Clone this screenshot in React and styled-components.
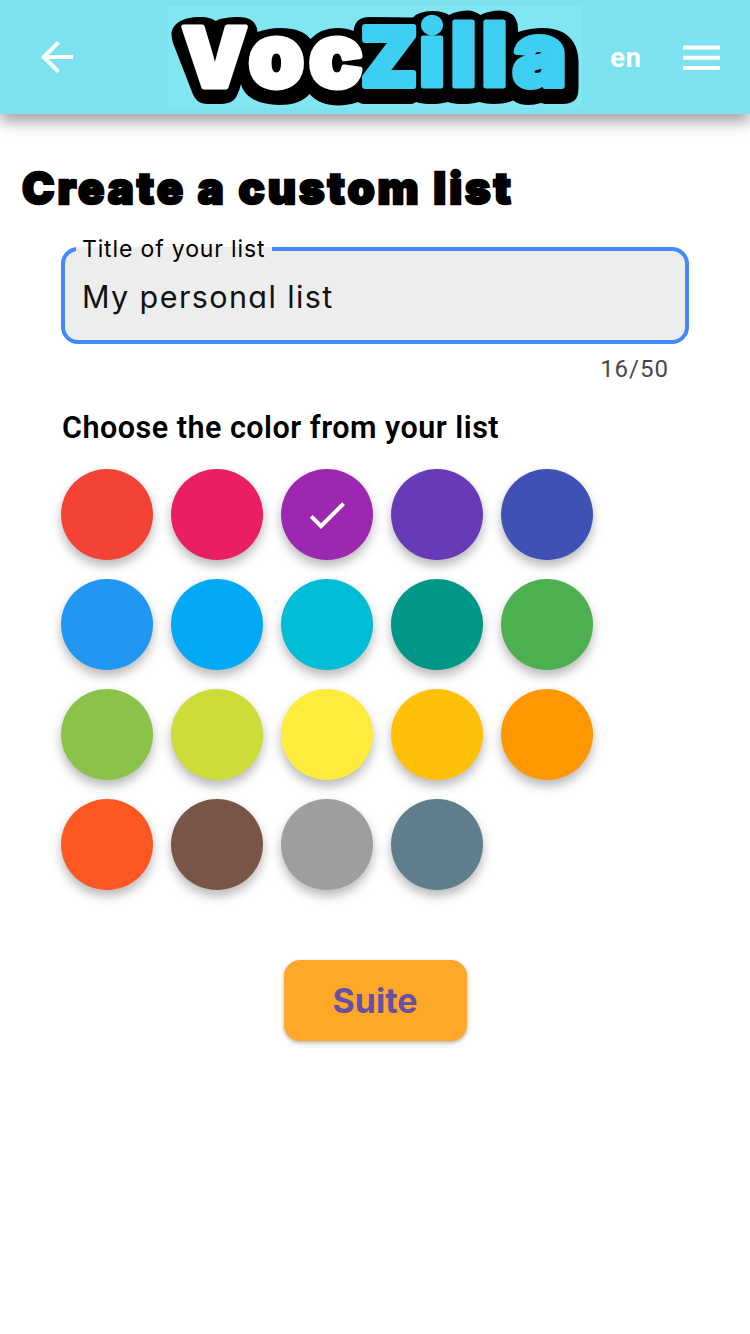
import React, { useState } from "react";
import styled, { createGlobalStyle } from "styled-components";

const GlobalStyle = createGlobalStyle`
  * { box-sizing: border-box; }
  body { margin: 0; background: #fff; font-family: Roboto, sans-serif; }
  button { border: 0; background: none; padding: 0; font: inherit; cursor: pointer; }
`;

const Page = styled.div`
  min-height: 1334px;
  background: #fff;
  overflow: hidden;
`;

const Header = styled.header`
  display: flex;
  align-items: center;
  height: 114px;
  background: #7de2f0;
  box-shadow: 0 8px 14px rgba(0, 0, 0, 0.36);
`;

const BackButton = styled.button`
  display: flex;
  justify-content: center;
  width: 114px;
`;

const Brand = styled.div`
  width: 414px;
  height: 102px;
  margin-left: 54px;
  background: #80e7f2;
`;

const Language = styled.button`
  margin-left: 27px;
  padding-top: 2px;
  width: 34px;
  color: #fff;
  font-size: 27px;
  font-weight: 700;
  line-height: 32px;
  letter-spacing: 1px;
`;

const MenuButton = styled.button`
  display: flex;
  margin-left: 40px;
  padding-top: 1px;
`;

const Title = styled.h1`
  margin: 47px 0 0 22px;
  height: 58px;
  font-family: Inter, sans-serif;
  font-size: 43.5px;
  font-weight: 900;
  line-height: 55px;
  letter-spacing: 3px;
  color: #000;
  -webkit-text-stroke: 2.4px #000;
  white-space: nowrap;
`;

const Form = styled.form`
  padding: 0 61px;
`;

const Field = styled.fieldset`
  margin: 15px 0 0;
  padding: 0 17px;
  height: 110px;
  min-width: 0;
  border: 4px solid #448aff;
  border-radius: 17px;
  background: #ededed;
`;

const FieldLabel = styled.legend`
  margin-left: -6px;
  padding: 0 7px 0 6px;
  height: 30px;
  font-family: Inter, sans-serif;
  font-feature-settings: "cv11";
  font-size: 23px;
  font-weight: 400;
  line-height: 30px;
  letter-spacing: 0.85px;
  color: #000;
  white-space: nowrap;
`;

const TextInput = styled.input`
  display: block;
  width: 100%;
  height: 48px;
  margin-top: 8px;
  padding: 0;
  border: 0;
  outline: 0;
  background: transparent;
  font-family: Inter, sans-serif;
  font-feature-settings: "cv11";
  font-size: 30.5px;
  font-weight: 400;
  letter-spacing: 1.4px;
  color: #111;
`;

const Counter = styled.div`
  margin: 10px 20px 0 0;
  text-align: right;
  font-size: 24px;
  line-height: 30px;
  letter-spacing: 1px;
  color: #49454f;
`;

const Subtitle = styled.h2`
  margin: 26px 0 0 1px;
  font-size: 30.5px;
  font-weight: 650;
  line-height: 36px;
  letter-spacing: 0.5px;
  color: #000;
  white-space: nowrap;
`;

const Palette = styled.div`
  display: grid;
  grid-template-columns: repeat(5, 92px);
  gap: 19px 18px;
  margin-top: 23px;
`;

const Swatch = styled.button`
  display: flex;
  align-items: center;
  justify-content: center;
  width: 92px;
  height: 91px;
  border-radius: 50%;
  background: ${(p) => p.$color};
  box-shadow: 0 6px 11px rgba(0, 0, 0, 0.28);
`;

const Submit = styled.button`
  display: block;
  width: 183px;
  height: 81px;
  margin: 70px auto 0;
  border-radius: 16px;
  background: #ffa726;
  box-shadow: 0 2px 4px rgba(0, 0, 0, 0.3);
  color: #6750a4;
  font-family: Inter, sans-serif;
  font-size: 34px;
  font-weight: 700;
  line-height: 82px;
`;

const COLORS = [
  "#f44336", "#e91e63", "#9c27b0", "#673ab7", "#3f51b5",
  "#2196f3", "#03a9f4", "#00bcd4", "#009688", "#4caf50",
  "#8bc34a", "#cddc39", "#ffeb3b", "#ffc107", "#ff9800",
  "#ff5722", "#795548", "#9e9e9e", "#607d8b",
];

const LogoSvg = styled.svg`
  display: block;
  overflow: visible;
  font-family: Inter, sans-serif;
  font-weight: 900;
  stroke-linejoin: round;
`;

function Logo() {
  return (
    <LogoSvg width="414" height="102" viewBox="168 6 414 102">
      <path d="M171.500 34C172 24 182 17 200 17C208 17 213 19 215.500 21C221 18 230 17 238 17C251 17 257 23 257.500 32Q269 28 280 28Q302 28 310.500 39Q321 28 337 28Q347 28 353.500 31Q355 17 369 17L413 17.500Q419 11 432 11Q443 11 449 15Q457 10.500 469 10.500Q475 11 480.500 15Q489 10.500 500 10.500Q519 11 518 32Q530 28 543 28C568 28 578.500 43 578.500 62V88C578.500 99 574 104 562 104L545 104L541 103Q524 108 513 100.500C505 104.500 488 105 479.500 102C471 104.500 455 105 448 102C440 104.500 424 105 416.500 102L412 104H366Q360 104 358.500 102C341 108 321 107 309.500 94C303 102 292 105 279 105C261 105 244 98 241 84C237 98 235 104 219 104H208C199 104 195 100 192 92L173 43Q171.500 38 171.500 34Z" />
      <text fill="#fff" stroke="#fff" strokeWidth="5">
        <tspan x="182" y="86.500" fontSize="82">V</tspan>
        <tspan x="248.500 309" fontSize="89">oc</tspan>
      </text>
      <text fill="#3dcff2" stroke="#3dcff2" strokeWidth="6">
        <tspan x="361" y="86" fontSize="81">Z</tspan>
        <tspan x="419 450.500 481.500" fontSize="88" strokeWidth="5">ill</tspan>
        <tspan x="513" fontSize="89">a</tspan>
      </text>
    </LogoSvg>
  );
}

const ArrowIcon = () => (
  <svg width="48" height="48" viewBox="0 0 24 24" fill="#fff">
    <path d="M20 11H7.830l5.590-5.590L12 4l-8 8 8 8 1.410-1.410L7.830 13H20v-2z" />
  </svg>
);

const MenuIcon = () => (
  <svg width="37" height="26" viewBox="0 0 37 26" fill="#fff">
    <path d="M0 .5h37v4H0zM0 10.700h37v4H0zM0 20.900h37v4H0z" />
  </svg>
);

const CheckIcon = () => (
  <svg width="48" height="48" viewBox="0 0 24 24" fill="#fff">
    <path d="M9 16.170L4.830 12l-1.420 1.410L9 19 21 7l-1.410-1.410z" />
  </svg>
);

export default function App() {
  const [name, setName] = useState("My personal list");
  const [selected, setSelected] = useState("#9c27b0");
  return (
    <Page>
      <GlobalStyle />
      <Header>
        <BackButton aria-label="Back"><ArrowIcon /></BackButton>
        <Brand><Logo /></Brand>
        <Language>en</Language>
        <MenuButton aria-label="Menu"><MenuIcon /></MenuButton>
      </Header>
      <Title>Create a custom list</Title>
      <Form onSubmit={(e) => e.preventDefault()}>
        <Field>
          <FieldLabel>Title of your list</FieldLabel>
          <TextInput value={name} maxLength={50} onChange={(e) => setName(e.target.value)} />
        </Field>
        <Counter>{name.length}/50</Counter>
        <Subtitle>Choose the color from your list</Subtitle>
        <Palette>
          {COLORS.map((c) => (
            <Swatch key={c} type="button" $color={c} aria-label={c} onClick={() => setSelected(c)}>
              {selected === c && <CheckIcon />}
            </Swatch>
          ))}
        </Palette>
        <Submit type="submit">Suite</Submit>
      </Form>
    </Page>
  );
}
